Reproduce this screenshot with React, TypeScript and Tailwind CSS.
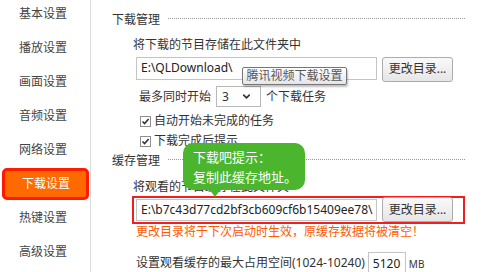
import { ChevronDown } from 'lucide-react';

const menu = ['基本设置', '播放设置', '画面设置', '音频设置', '网络设置', '下载设置', '热键设置', '高级设置'];
const active = '下载设置';

function Checkbox() {
  return (
    <div className="flex h-[11px] w-[11px] items-center justify-center border border-[#8f8f8f] bg-white">
      <svg width="9" height="9" viewBox="0 0 9 9">
        <path d="M1.5 4.5 L3.6 6.6 L7.6 2" fill="none" stroke="#333" strokeWidth="1.6" />
      </svg>
    </div>
  );
}

function DirButton() {
  return (
    <button className="flex h-[25px] w-[71px] items-center justify-center rounded-[3px] border border-[#acacac] bg-gradient-to-b from-[#f9f9f9] to-[#e6e6e6] text-[12px] text-[#333]">
      更改目录...
    </button>
  );
}

function SectionTitle({ label }: { label: string }) {
  return (
    <div className="flex h-[20px] items-center pl-[21px]">
      <span>{label}</span>
      <div className="ml-[8px] mb-[3px] flex-1 border-t border-dotted border-[#9a9a9a]" />
    </div>
  );
}

export default function App() {
  return (
    <div
      className="relative flex h-[272px] w-[494px] overflow-hidden bg-white text-[12px] text-[#333]"
      style={{ fontFamily: '"Noto Sans", "Noto Sans CJK SC", sans-serif' }}
    >
      {/* sidebar */}
      <div className="-mt-[3px] w-[91px] shrink-0 border-r border-[#dcdcdc]">
        {menu.map((item) =>
          item === active ? (
            <div key={item} className="flex h-[34px] items-center pl-[2px]">
              <div className="flex h-[32px] w-[87px] items-center rounded-[5px] border-[3px] border-[#ff1a00] bg-[#ff6a00] pl-[17px] text-white">
                {item}
              </div>
            </div>
          ) : (
            <div key={item} className="flex h-[34px] items-center pl-[19px] text-[#444]">
              {item}
            </div>
          )
        )}
      </div>

      {/* content */}
      <div className="flex flex-1 flex-col pr-[44px] pt-[10px]">
        <SectionTitle label="下载管理" />
        <div className="mt-[5px] flex h-[20px] items-center pl-[42px]">将下载的节目存储在此文件夹中</div>
        <div className="mt-[2px] flex h-[26px] items-start pl-[45px]">
          <div className="flex h-[23px] w-[241px] items-center border border-[#c4c4c4] pl-[4px] text-[#222]">
            E:\QLDownload\
          </div>
          <div className="ml-[5px]">
            <DirButton />
          </div>
        </div>
        <div className="mt-[3px] flex h-[22px] items-center pl-[48px]">
          <span>最多同时开始</span>
          <div className="ml-[5px] flex h-[21px] w-[45px] items-center justify-between border border-[#b8b8b8] pl-[5px] pr-[8px]">
            <span>3</span>
            <ChevronDown size={11} strokeWidth={3.5} className="text-[#333]" />
          </div>
          <span className="ml-[5px]">个下载任务</span>
        </div>
        <div className="mt-[4px] flex h-[20px] items-center gap-[3px] pl-[49px]">
          <Checkbox />
          <span>自动开始未完成的任务</span>
        </div>
        <div className="flex h-[20px] items-center gap-[3px] pl-[49px]">
          <Checkbox />
          <span>下载完成后提示</span>
        </div>
        <SectionTitle label="缓存管理" />
        <div className="mt-[6px] flex h-[19px] items-center pl-[42px]">将观看的节目缓存在此文件夹</div>
        <div className="ml-[41px] flex h-[28px] w-[333px] items-center border-2 border-[#f01e1e] pl-[2px]">
          <div className="flex h-[22px] w-[241px] items-center overflow-hidden whitespace-nowrap border border-[#c4c4c4] pl-[4px] text-[#222]">
            E:\b7c43d77cd2bf3cb609cf6b15409ee78\
          </div>
          <div className="ml-[5px]">
            <DirButton />
          </div>
        </div>
        <div className="flex h-[16px] items-center pl-[45px] text-[#ff5a00]">
          更改目录将于下次启动时生效，原缓存数据将被清空！
        </div>
        <div className="mt-[12px] flex h-[20px] items-start pl-[45px]">
          <span className="mt-[2px]">设置观看缓存的最大占用空间(1024-10240)</span>
          <div className="ml-[3px] flex h-[24px] w-[38px] items-center border border-[#c4c4c4] pl-[4px] text-[#222]">
            5120
          </div>
          <span className="ml-[3px] mt-[5px] text-[10px]">MB</span>
        </div>
      </div>

      {/* hover tooltip */}
      <div className="absolute left-[242px] top-[67px] flex h-[18px] w-[105px] items-center justify-center rounded-[2px] border border-[#767676] bg-gradient-to-b from-white to-[#e4e4ec] text-[12px] text-[#575757] shadow-[1px_2px_2px_rgba(0,0,0,0.25)]">
        腾讯视频下载设置
      </div>

      {/* green hint bubble */}
      <div className="absolute left-[183px] top-[143px] h-[47px] w-[122px] rounded-[10px] bg-[#4cb52e] pl-[10px] pt-[4px] text-[13px] leading-[20px] text-white">
        <div>下载吧提示：</div>
        <div>复制此缓存地址。</div>
        <div className="absolute left-[26px] top-[46px] h-0 w-0 border-x-[6px] border-t-[8px] border-x-transparent border-t-[#4cb52e]" />
      </div>
    </div>
  );
}
